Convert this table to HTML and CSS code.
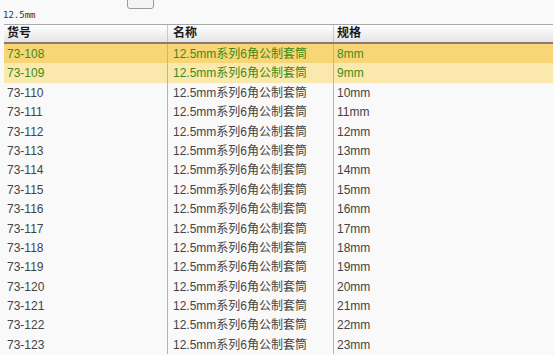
FILE: index.html
```html
<!DOCTYPE html>
<html>
<head>
<meta charset="utf-8">
<link rel="stylesheet" href="styles.css">
</head>
<body>
<div class="topbar"><span class="btn"></span></div>
<div class="caption">12.5mm</div>
<div class="grid">
  <div class="row head"><div class="c c1">货号</div><div class="c c2">名称</div><div class="c c3">规格</div></div>
  <div class="row sel1"><div class="c c1">73-108</div><div class="c c2">12.5mm系列6角公制套筒</div><div class="c c3">8mm</div></div>
  <div class="row sel2"><div class="c c1">73-109</div><div class="c c2">12.5mm系列6角公制套筒</div><div class="c c3">9mm</div></div>
  <div class="row"><div class="c c1">73-110</div><div class="c c2">12.5mm系列6角公制套筒</div><div class="c c3">10mm</div></div>
  <div class="row"><div class="c c1">73-111</div><div class="c c2">12.5mm系列6角公制套筒</div><div class="c c3">11mm</div></div>
  <div class="row"><div class="c c1">73-112</div><div class="c c2">12.5mm系列6角公制套筒</div><div class="c c3">12mm</div></div>
  <div class="row"><div class="c c1">73-113</div><div class="c c2">12.5mm系列6角公制套筒</div><div class="c c3">13mm</div></div>
  <div class="row"><div class="c c1">73-114</div><div class="c c2">12.5mm系列6角公制套筒</div><div class="c c3">14mm</div></div>
  <div class="row"><div class="c c1">73-115</div><div class="c c2">12.5mm系列6角公制套筒</div><div class="c c3">15mm</div></div>
  <div class="row"><div class="c c1">73-116</div><div class="c c2">12.5mm系列6角公制套筒</div><div class="c c3">16mm</div></div>
  <div class="row"><div class="c c1">73-117</div><div class="c c2">12.5mm系列6角公制套筒</div><div class="c c3">17mm</div></div>
  <div class="row"><div class="c c1">73-118</div><div class="c c2">12.5mm系列6角公制套筒</div><div class="c c3">18mm</div></div>
  <div class="row"><div class="c c1">73-119</div><div class="c c2">12.5mm系列6角公制套筒</div><div class="c c3">19mm</div></div>
  <div class="row"><div class="c c1">73-120</div><div class="c c2">12.5mm系列6角公制套筒</div><div class="c c3">20mm</div></div>
  <div class="row"><div class="c c1">73-121</div><div class="c c2">12.5mm系列6角公制套筒</div><div class="c c3">21mm</div></div>
  <div class="row"><div class="c c1">73-122</div><div class="c c2">12.5mm系列6角公制套筒</div><div class="c c3">22mm</div></div>
  <div class="row"><div class="c c1">73-123</div><div class="c c2">12.5mm系列6角公制套筒</div><div class="c c3">23mm</div></div>
</div>
</body>
</html>
```

FILE: styles.css
```css
html, body {
  margin: 0;
  padding: 0;
  background: #f9f9f9;
  overflow: hidden;
}
body {
  font-family: "Liberation Sans", "Noto Sans CJK SC", sans-serif;
  font-size: 12px;
  color: #444;
}
.topbar {
  height: 9px;
  overflow: hidden;
  padding-left: 127px;
}
.btn {
  display: block;
  width: 25px;
  height: 20px;
  margin-top: -13px;
  border: 1px solid #9a9a9a;
  border-radius: 3px;
  background: #f4f4f4;
}
.caption {
  font-family: "DejaVu Sans Mono", "Liberation Mono", monospace;
  font-size: 9px;
  line-height: 12px;
  height: 15px;
  padding-left: 3px;
  box-sizing: border-box;
  color: #333333;
}
.grid {
  margin-left: 4px;
  margin-right: 1px;
}
.row {
  display: grid;
  grid-template-columns: 164px 166px 1fr;
  height: 19.4px;
  line-height: 20px;
  white-space: nowrap;
}
.c {
  border-right: 1px solid #b4b4b4;
  overflow: hidden;
}
.c3 { border-right: none; padding-left: 3px; }
.c1 { padding-left: 3px; }
.c2 { padding-left: 5px; }
.head {
  height: 20px;
  line-height: 17px;
  border-top: 1px solid #a8a8a8;
  border-bottom: 2px solid #8a7a72;
  background: linear-gradient(#ffffff, #e4e4e4);
  font-weight: bold;
  color: #1a1a1a;
  box-sizing: border-box;
}
.head .c { border-right-color: #c8c8c8; }
.sel1 {
  background: #f8d678;
  color: #3f8a14;
}
.sel2 {
  background: #fbe8ad;
  color: #3f8a14;
}
```
